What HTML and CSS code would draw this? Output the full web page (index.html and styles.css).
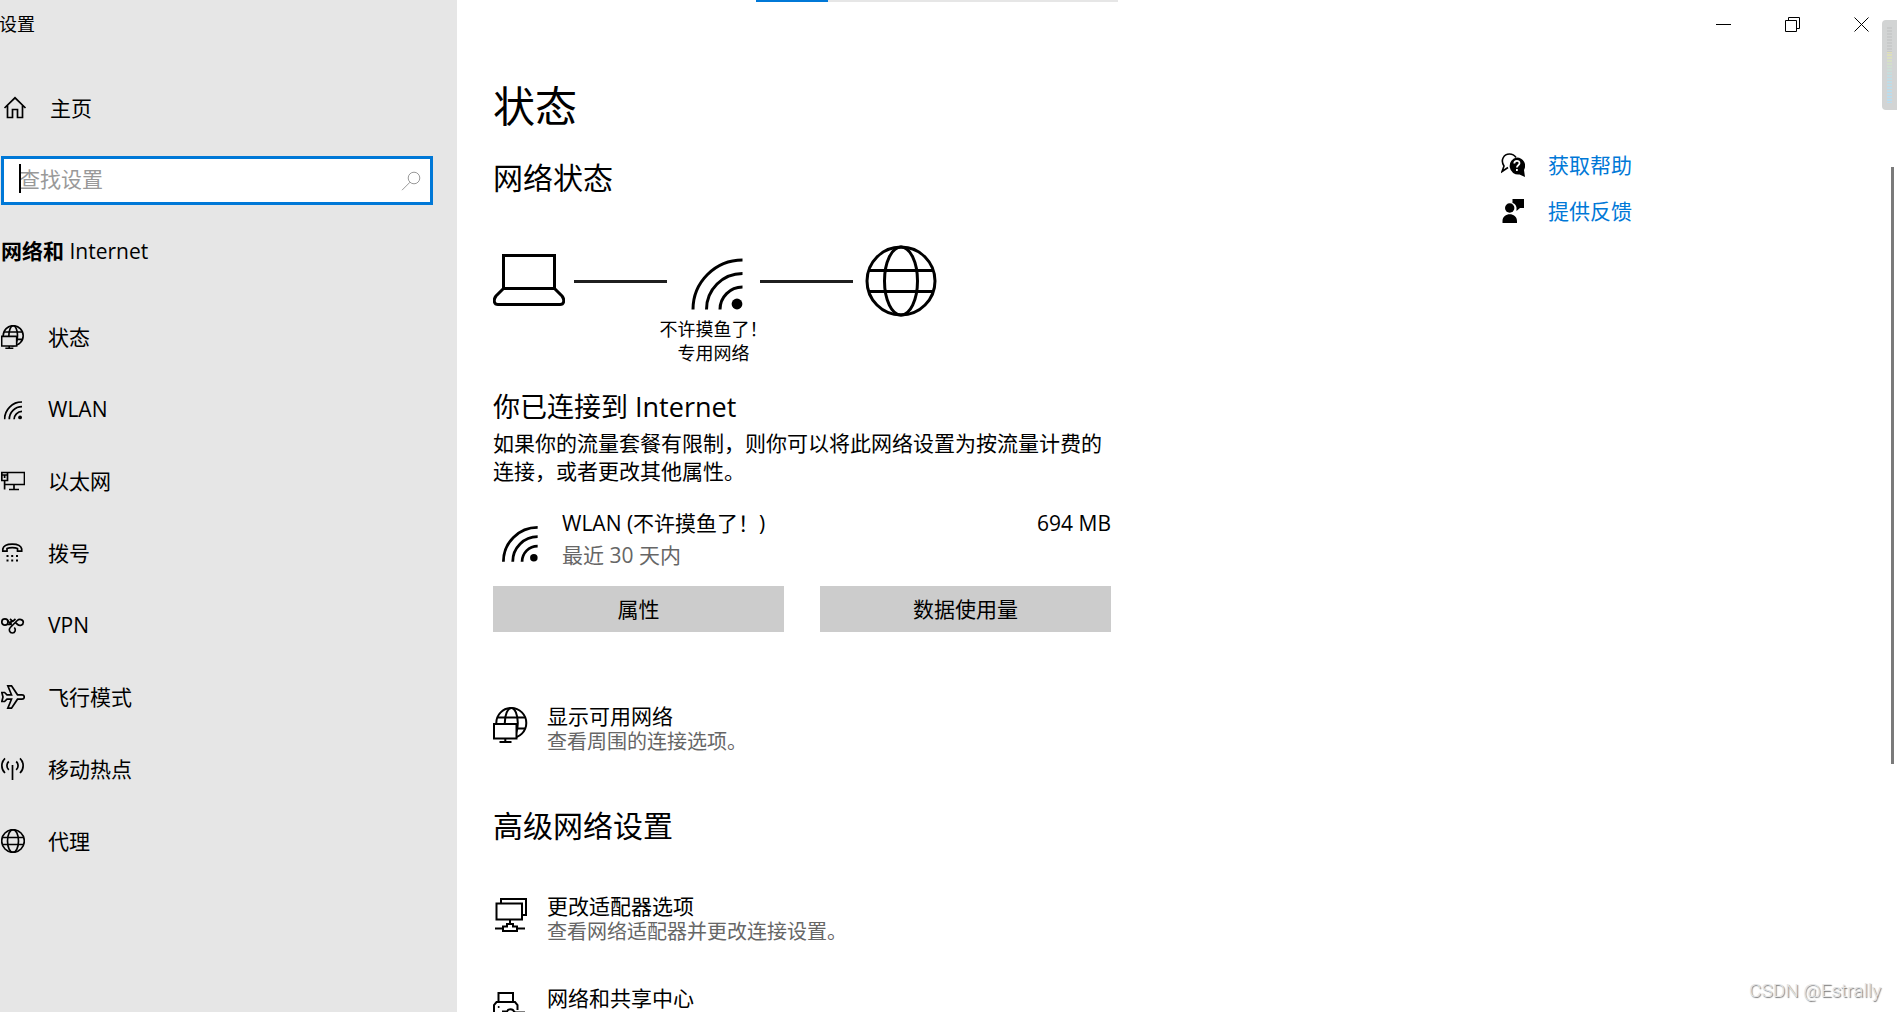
FILE: index.html
```html
<!DOCTYPE html>
<html lang="zh-CN">
<head>
<meta charset="UTF-8">
<title>设置</title>
<link rel="stylesheet" href="styles.css">
</head>
<body>

<!-- Iconos compartidos -->
<svg class="sprite" aria-hidden="true">
  <symbol id="wifi" viewBox="0 0 52 52">
    <path d="M2 51.500A49.500 49.500 0 0 1 51.500 2M15.500 51.500A36 36 0 0 1 51.500 15.500M29 51.500A22.500 22.500 0 0 1 51.500 29"/>
    <circle cx="46" cy="46" r="5.400" fill="currentColor" stroke="none"/>
  </symbol>
  <symbol id="globe" viewBox="0 0 72 72">
    <circle cx="36" cy="36" r="34"/>
    <ellipse cx="36" cy="36" rx="16.500" ry="34"/>
    <path d="M4 25.500h64M4 46.500h64"/>
  </symbol>
  <symbol id="network" viewBox="0 0 36 36">
    <circle cx="18.300" cy="16" r="15"/>
    <ellipse cx="18.300" cy="16" rx="6.500" ry="15"/>
    <path d="M4.500 10.500h27.500M4.500 21.500h27.500"/>
    <path class="screen" d="M1 17h22.500v14.500H1z"/>
    <path d="M12.300 31.500v3.500M6.500 35h12"/>
  </symbol>
</svg>

<div class="window">
  <aside class="sidebar">
    <div class="app-title">设置</div>
    <a class="home" href="#home">
      <svg class="icon" viewBox="0 0 24 24"><path d="M1.500 12L12 1.800 22.500 12M4.500 9.500v12h5v-8h5v8h5v-12"/></svg>
      主页
    </a>
    <div class="search">
      <input type="text" class="search-input" aria-label="查找设置" placeholder="查找设置">
      <span class="caret"></span>
      <svg class="search-icon" viewBox="0 0 20 20"><circle cx="13" cy="7" r="5.800"/><path d="M9 11.200L1 19.200"/></svg>
    </div>
    <h2 class="category">网络和 <span class="latin">Internet</span></h2>
    <nav class="nav">
      <a href="#status"><svg class="icon net"><use href="#network"/></svg>状态</a>
      <a href="#wlan"><svg class="icon wifi-small" viewBox="-8 -12 68 68"><use href="#wifi" width="52" height="52"/></svg>WLAN</a>
      <a href="#ethernet"><svg class="icon" viewBox="0 0 24 24"><path d="M6.500 3.500h17v12h-20M.8 3.500h5.700v8H.8zM1 6h5.500M3.600 6v3M3.600 11.500v9M13 15.500v5M8 20.500h10"/></svg>以太网</a>
      <a href="#dialup"><svg class="icon" viewBox="0 0 24 24"><path d="M1.800 10.200V8C3 1.500 19.500 1.500 20.700 8v2.200h-4.200V7.500C14 6.300 8.500 6.300 6 7.500v2.700z"/><path class="dots" d="M6.500 14v2M11.200 14v2M16 14v2M6.500 18.500v2M11.200 18.500v2M16 18.500v2"/></svg>拨号</a>
      <a href="#vpn"><svg class="icon" viewBox="0 0 24 24"><circle cx="3.900" cy="9" r="3.100"/><path d="M6.300 7l3.700 4.500M10 8V11.500H6.500M9 6l2.700 2.300L14.500 6M9.300 14.500l7-7c2-2 6-1 6 1.800 0 3-3.700 4-5.700 2.200l-2-1.800M13.300 14.500c2 2 .8 5.500-1.900 5.500-2.900 0-4.100-3.500-2.100-5.500"/></svg>VPN</a>
      <a href="#airplane"><svg class="icon" viewBox="0 0 24 24"><path d="M.8 7.500h2.800L6 9.800h4.500L6.800.8h3.700l6 9H21c3 0 3 4.400 0 4.400h-4.500l-6 9H6.800l3.700-9H6l-2.400 2.300H.8L2 12z"/></svg>飞行模式</a>
      <a href="#hotspot"><svg class="icon" viewBox="0 0 24 24"><path d="M11.500 8v15M7.800 4.500c-2.500 2.300-2.500 6 0 8.300M15.200 4.500c2.500 2.300 2.500 6 0 8.300M4 1.300c-4.200 4-4.200 10.700 0 14.700M19 1.300c4.200 4 4.200 10.700 0 14.700"/></svg>移动热点</a>
      <a href="#proxy"><svg class="icon globe-small"><use href="#globe"/></svg>代理</a>
    </nav>
  </aside>

  <div class="main">
    <div class="progress"><div class="progress-value"></div></div>
    <header class="titlebar">
      <button type="button" aria-label="最小化"><svg viewBox="0 0 15 15"><path d="M0 7.500h15"/></svg></button>
      <button type="button" aria-label="还原"><svg viewBox="0 0 15 15"><path d="M.5 3.500h11v11H.5zM3.500 3.500v-3h11v11h-3"/></svg></button>
      <button type="button" aria-label="关闭"><svg viewBox="0 0 15 15"><path d="M.5 .5l14 14M14.500 .5l-14 14"/></svg></button>
    </header>

    <div class="page">
      <main class="content">
        <h1>状态</h1>
        <h2>网络状态</h2>

        <div class="diagram">
          <svg class="device" viewBox="0 0 72 72"><path d="M10.500 10.500h51v33h-51zM10.500 43.500L3 51c-3 4-2 8.500 2 8.500h62c4 0 5-4.500 2-8.500l-7.500-7.500"/></svg>
          <span class="wire"></span>
          <div class="access-point">
            <svg class="device" viewBox="-13 -13 72 72"><use href="#wifi" width="52" height="52"/></svg>
            <span>不许摸鱼了！</span>
            <span>专用网络</span>
          </div>
          <span class="wire"></span>
          <svg class="device internet"><use href="#globe"/></svg>
        </div>

        <h3>你已连接到 Internet</h3>
        <p class="description">如果你的流量套餐有限制，则你可以将此网络设置为按流量计费的连接，或者更改其他属性。</p>

        <div class="usage">
          <svg class="usage-icon"><use href="#wifi"/></svg>
          <div class="usage-name">
            <div>WLAN (不许摸鱼了！)</div>
            <div class="muted">最近 30 天内</div>
          </div>
          <div>694 MB</div>
        </div>
        <div class="buttons">
          <button type="button">属性</button>
          <button type="button">数据使用量</button>
        </div>

        <a class="option available" href="#available">
          <svg class="option-icon"><use href="#network"/></svg>
          <span>显示可用网络<small>查看周围的连接选项。</small></span>
        </a>

        <h2 class="advanced">高级网络设置</h2>
        <a class="option" href="#adapter">
          <svg class="option-icon" viewBox="0 -6 36 36"><path d="M3.500 .500h25.500v16H3.500zM8 0v-4h25v16h-4M17 16.500v4M2 25.500h8M24 25.500h8M10 28v-4.500h4v-2.500h6v2.500h4V28z"/></svg>
          <span>更改适配器选项<small>查看网络适配器并更改连接设置。</small></span>
        </a>
        <a class="option" href="#sharing">
          <svg class="option-icon" viewBox="0 -3 36 36"><path d="M5.500 10V1h14.500v9M12 22H1V13l2.500-3H22l2.500 3v5M10 29v-9.500h4c1-3 6-3 7 0l1.500 1H31V29z"/><circle cx="5.700" cy="15" r="1" fill="currentColor" stroke="none"/></svg>
          <span>网络和共享中心</span>
        </a>
      </main>

      <aside class="help">
        <a href="#help">
          <svg class="help-icon" viewBox="0 0 24 24"><path d="M7 14.500L1 18.500l2-5.500C-1 7 3 1 8.500 1c3 0 5 1.200 6.500 3.500" fill="none" stroke="currentColor" stroke-width="1.600"/><path d="M16 4.500a8.300 8.300 0 0 1 7 12.500l1 7-5.500-2.500A8.400 8.400 0 1 1 16 4.500z"/><path d="M13.300 10.500c0-3.500 5.200-3.500 5.200-.3 0 2-2.600 2-2.600 4.300M15.900 16v2" fill="none" stroke="#fff" stroke-width="1.800"/></svg>
          获取帮助
        </a>
        <a href="#feedback">
          <svg class="help-icon" viewBox="0 0 24 24"><circle cx="8.700" cy="9" r="4.700"/><path d="M1.500 24v-2c0-9 14.500-9 14.500 0v2zM11.500 0H23v9h-4l-3.500 3V8.500c-.5-2.500-2-4-4-4.500z"/></svg>
          提供反馈
        </a>
      </aside>
    </div>

    <div class="meter"><div class="meter-level"></div></div>
    <div class="scroll-thumb"></div>
    <div class="watermark">CSDN @Estrally</div>
  </div>
</div>

</body>
</html>
```
FILE: styles.css
```css
* {
  box-sizing: border-box;
}

body {
  margin: 0;
  background-color: #FFFFFF;
  color: #000000;
  font-family: "Open Sans", "Noto Sans CJK SC", sans-serif;
  font-size: 21px;
  line-height: 28px;
}

h1, h2, h3, p {
  margin: 0;
  font-weight: 400;
}

a {
  color: inherit;
  text-decoration: none;
}

button {
  border: none;
  font: inherit;
  color: inherit;
}

svg {
  display: block;
  flex: none;
  fill: none;
  stroke: currentColor;
}

.sprite {
  position: absolute;
  width: 0;
  height: 0;
}

.window {
  display: flex;
  height: 100vh;
  overflow: hidden;
}

/* Barra lateral */
.sidebar {
  --surface: #E6E6E6;
  flex: none;
  width: 457px;
  padding: 0 24px 0 1px;
  background-color: #E6E6E6;
}

.app-title {
  height: 48px;
  font-size: 18px;
  line-height: 48px;
  margin-left: -2px;
}

.home {
  display: flex;
  align-items: center;
  gap: 23px;
  height: 72px;
  margin: 24px 0 12px;
  padding-left: 2px;
}

.icon {
  width: 24px;
  height: 24px;
  stroke-width: 1.7;
}

.net {
  stroke-width: 2.4;
}

.wifi-small {
  stroke-width: 5;
}

.globe-small {
  stroke-width: 5;
}

.dots {
  stroke-width: 2;
}

.screen {
  fill: var(--surface);
}

.search {
  position: relative;
  display: flex;
  align-items: center;
  height: 49px;
}

.search-input {
  width: 100%;
  height: 100%;
  padding: 0 48px 4px 15px;
  border: 3px solid #0078D7;
  border-radius: 0;
  outline: none;
  background-color: #FFFFFF;
  font: inherit;
}

.search-input::placeholder {
  color: #999999;
}

.caret {
  position: absolute;
  left: 18px;
  top: 8px;
  width: 2px;
  height: 29px;
  background-color: #000000;
}

.search-icon {
  position: absolute;
  right: 12px;
  width: 20px;
  height: 20px;
  color: #999999;
}

.category {
  margin: 32px 0 36px;
  font-size: 21px;
  font-weight: 700;
}

.latin {
  font-weight: 500;
}

.nav a {
  display: flex;
  align-items: center;
  gap: 23px;
  height: 72px;
}

/* Zona principal */
.main {
  --surface: #FFFFFF;
  position: relative;
  flex: 1;
  min-width: 0;
}

.progress {
  position: absolute;
  top: 0;
  left: 299px;
  width: 362px;
  height: 2px;
  background-color: #E6E6E6;
}

.progress-value {
  width: 72px;
  height: 2px;
  background-color: #0078D7;
}

.titlebar {
  display: flex;
  justify-content: flex-end;
  height: 48px;
  padding-right: 1px;
}

.titlebar button {
  display: flex;
  align-items: center;
  justify-content: center;
  width: 69px;
  padding: 0;
  background: none;
}

.titlebar svg {
  width: 15px;
  height: 15px;
}

.page {
  display: grid;
  grid-template-columns: minmax(0, 618px) minmax(150px, 1fr);
  column-gap: 390px;
  padding: 30px 24px 0 36px;
}

.content h1 {
  font-size: 42px;
  line-height: 56px;
}

.content h2 {
  margin-top: 24px;
  font-size: 30px;
  line-height: 40px;
}

.content h3 {
  margin-top: 24px;
  font-size: 27px;
  line-height: 36px;
}

/* Diagrama de red */
.diagram {
  display: flex;
  align-items: flex-start;
  margin-top: 47px;
}

.device {
  width: 72px;
  height: 72px;
  stroke-width: 3;
}

.wire {
  width: 93px;
  height: 3px;
  margin-top: 35px;
  background-color: #1F1F1F;
}

.device + .wire {
  margin-left: 9px;
}

.wire + .internet {
  margin-left: 12px;
}

.access-point {
  display: flex;
  flex-direction: column;
  align-items: center;
  width: 93px;
  font-size: 18px;
  line-height: 24px;
  white-space: nowrap;
}

.description {
  margin-top: 4px;
}

.usage {
  display: flex;
  margin-top: 22px;
  line-height: 32px;
}

.usage-icon {
  width: 36px;
  height: 36px;
  margin: 19px 24px 0 9px;
  stroke-width: 4;
}

.usage-name {
  flex: 1;
}

.muted {
  color: #666666;
}

.buttons {
  display: grid;
  grid-template-columns: 1fr 1fr;
  gap: 36px;
  margin-top: 15px;
}

.buttons button {
  height: 46px;
  padding: 0;
  background-color: #CCCCCC;
}

.option {
  display: flex;
  align-items: flex-start;
  gap: 18px;
  margin-bottom: 40px;
  line-height: 26px;
}

.option-icon {
  width: 36px;
  height: 36px;
  margin-top: 4px;
  stroke-width: 2;
}

.option small {
  display: block;
  color: #666666;
  font-size: 20px;
}

.available {
  margin: 71px 0 0;
}

.content .advanced {
  margin: 51px 0 47px;
}

/* Enlaces de ayuda */
.help {
  display: flex;
  flex-direction: column;
  gap: 18px;
  padding-top: 73px;
}

.help a {
  display: flex;
  align-items: center;
  gap: 23px;
  color: #0078D7;
}

.help-icon {
  width: 24px;
  height: 24px;
  color: #000000;
  fill: currentColor;
  stroke: none;
}

.meter {
  position: absolute;
  top: 20px;
  right: 0;
  width: 15px;
  height: 90px;
  padding: 7px 5px;
  border-radius: 4px 0 0 4px;
  background-color: #D2D4D4;
}

.meter-level {
  height: 76px;
  background:
    repeating-linear-gradient(to bottom, transparent 0 2px, #D2D4D4 2px 3px),
    linear-gradient(to bottom, #C8CACA 25px, #E2E0B4 25px, #C2DCE4 50px, #B9DCEF);
}

.scroll-thumb {
  position: absolute;
  top: 167px;
  right: 3px;
  width: 3px;
  height: 597px;
  background-color: #7A7A7A;
}

.watermark {
  position: absolute;
  right: 16px;
  bottom: 7px;
  color: #E4E4E4;
  font-family: Roboto, sans-serif;
  font-size: 19px;
  font-weight: 300;
  text-shadow: 1px 1px 1px #777777;
}
```
